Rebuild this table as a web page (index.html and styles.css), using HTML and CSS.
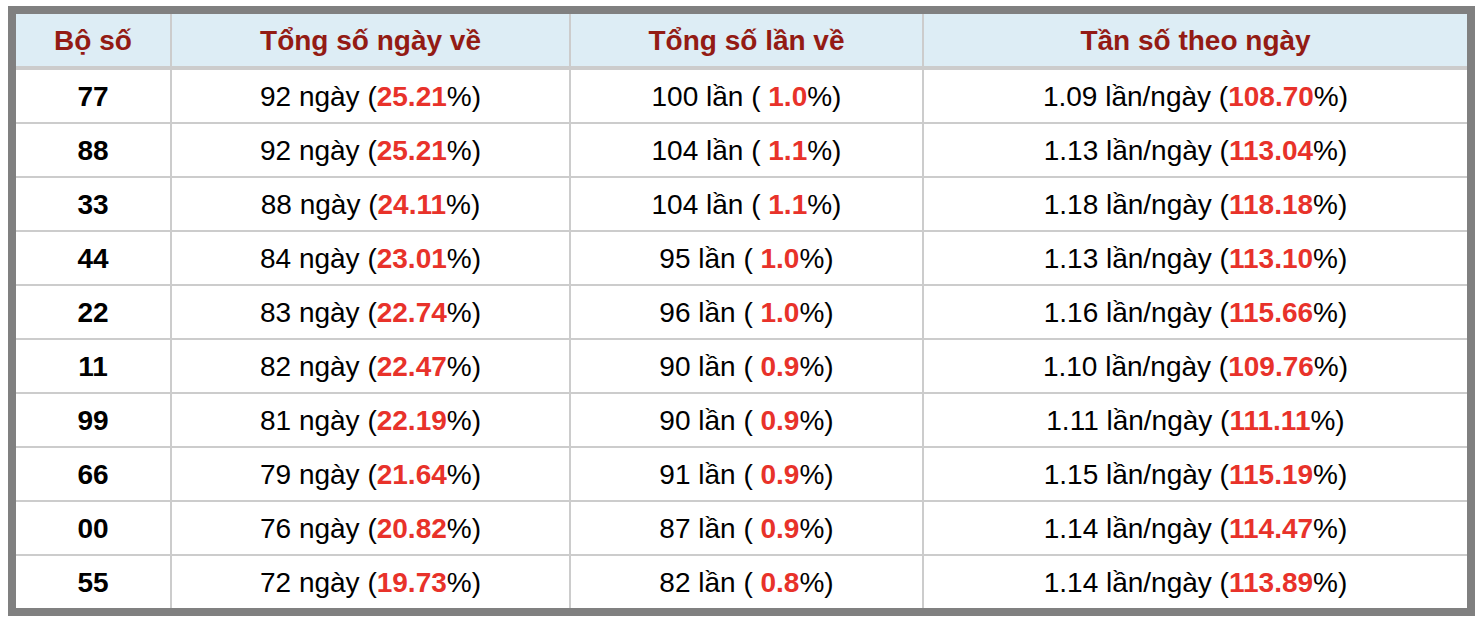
FILE: index.html
```html
<!DOCTYPE html>
<html lang="vi">
<head>
<meta charset="utf-8">
<title>Thống kê</title>
<link rel="stylesheet" href="styles.css">
</head>
<body>
<table class="stats">
  <colgroup>
    <col class="c1"><col class="c2"><col class="c3"><col class="c4">
  </colgroup>
  <thead>
    <tr>
      <th>Bộ số</th>
      <th>Tổng số ngày về</th>
      <th>Tổng số lần về</th>
      <th>Tần số theo ngày</th>
    </tr>
  </thead>
  <tbody>
    <tr><td class="num">77</td><td>92 ngày (<b>25.21</b>%)</td><td>100 lần ( <b>1.0</b>%)</td><td>1.09 lần/ngày (<b>108.70</b>%)</td></tr>
    <tr><td class="num">88</td><td>92 ngày (<b>25.21</b>%)</td><td>104 lần ( <b>1.1</b>%)</td><td>1.13 lần/ngày (<b>113.04</b>%)</td></tr>
    <tr><td class="num">33</td><td>88 ngày (<b>24.11</b>%)</td><td>104 lần ( <b>1.1</b>%)</td><td>1.18 lần/ngày (<b>118.18</b>%)</td></tr>
    <tr><td class="num">44</td><td>84 ngày (<b>23.01</b>%)</td><td>95 lần ( <b>1.0</b>%)</td><td>1.13 lần/ngày (<b>113.10</b>%)</td></tr>
    <tr><td class="num">22</td><td>83 ngày (<b>22.74</b>%)</td><td>96 lần ( <b>1.0</b>%)</td><td>1.16 lần/ngày (<b>115.66</b>%)</td></tr>
    <tr><td class="num">11</td><td>82 ngày (<b>22.47</b>%)</td><td>90 lần ( <b>0.9</b>%)</td><td>1.10 lần/ngày (<b>109.76</b>%)</td></tr>
    <tr><td class="num">99</td><td>81 ngày (<b>22.19</b>%)</td><td>90 lần ( <b>0.9</b>%)</td><td>1.11 lần/ngày (<b>111.11</b>%)</td></tr>
    <tr><td class="num">66</td><td>79 ngày (<b>21.64</b>%)</td><td>91 lần ( <b>0.9</b>%)</td><td>1.15 lần/ngày (<b>115.19</b>%)</td></tr>
    <tr><td class="num">00</td><td>76 ngày (<b>20.82</b>%)</td><td>87 lần ( <b>0.9</b>%)</td><td>1.14 lần/ngày (<b>114.47</b>%)</td></tr>
    <tr><td class="num">55</td><td>72 ngày (<b>19.73</b>%)</td><td>82 lần ( <b>0.8</b>%)</td><td>1.14 lần/ngày (<b>113.89</b>%)</td></tr>
  </tbody>
</table>
</body>
</html>
```

FILE: styles.css
```css
html, body {
  background: #ffffff;
}
body {
  margin: 6px 5px 0 8px;
  font-family: "Liberation Sans", Arial, sans-serif;
  font-size: 28px;
  color: #000000;
}
.stats {
  width: 1467px;
  table-layout: fixed;
  border-collapse: separate;
  border-spacing: 0;
  border: 8px solid #808080;
}
.c1 { width: 156px; }
.c2 { width: 399px; }
.c3 { width: 353px; }
.c4 { width: 543px; }
.stats th,
.stats td {
  padding: 1px 0 0;
  text-align: center;
  vertical-align: middle;
  line-height: 51px;
  white-space: nowrap;
  border-right: 2px solid #cccccc;
  border-bottom: 2px solid #cccccc;
}
.stats th:last-child,
.stats td:last-child {
  border-right: 0;
}
.stats tbody tr:last-child td {
  border-bottom: 0;
}
.stats th {
  background: #ddedf5;
  color: #931b14;
  font-weight: bold;
  border-bottom-width: 4px;
}
.stats td b {
  color: #e8322a;
  font-weight: bold;
}
.stats td.num {
  font-weight: bold;
}
```
